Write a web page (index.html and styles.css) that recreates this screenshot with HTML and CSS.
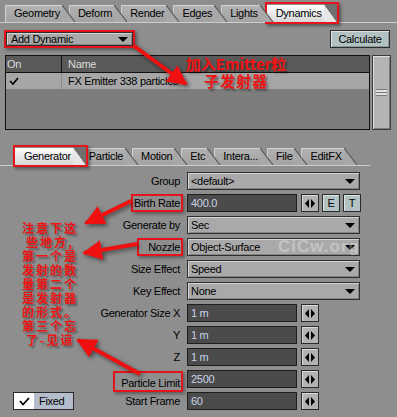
FILE: index.html
```html
<!DOCTYPE html>
<html lang="en">
<head>
    <meta charset="UTF-8">
    <meta name="viewport" content="width=device-width, initial-scale=1.0">
    <title>Dynamics</title>
    <link rel="stylesheet" href="styles.css">
</head>
<body>

<div class="panel">
    <div class="tabbar top-tabs">
        <div class="tab">Geometry</div>
        <div class="tab">Deform</div>
        <div class="tab">Render</div>
        <div class="tab">Edges</div>
        <div class="tab">Lights</div>
        <div class="mark mark-tab"><div class="tab active">Dynamics</div></div>
    </div>

    <div class="toolbar">
        <div class="mark mark-add"><div class="select add-dynamic"><span>Add Dynamic</span></div></div>
        <div class="button calc">Calculate</div>
    </div>

    <div class="listwrap">
        <div class="list">
            <div class="list-head">
                <div class="col-on">On</div>
                <div class="col-name">Name</div>
            </div>
            <div class="list-row">
                <div class="col-on">
                    <svg width="10" height="9" viewBox="0 0 10 9"><polyline points="1,4 4,7 9,1" fill="none" stroke="#000" stroke-width="1.6"/></svg>
                </div>
                <div class="col-name">FX Emitter 338 particles</div>
            </div>
        </div>
        <div class="scrollbar">
            <div class="grip"></div>
        </div>
    </div>

    <div class="tabbar sub-tabs">
        <div class="mark mark-tab"><div class="tab active">Generator</div></div>
        <div class="tab">Particle</div>
        <div class="tab">Motion</div>
        <div class="tab">Etc</div>
        <div class="tab">Intera...</div>
        <div class="tab">File</div>
        <div class="tab">EditFX</div>
    </div>

    <div class="form">
        <div class="row">
            <div class="label"><span>Group</span></div>
            <div class="select"><span>&lt;default&gt;</span></div>
        </div>
        <div class="row">
            <div class="label"><span class="marked">Birth Rate</span></div>
            <div class="field">400.0</div>
            <div class="spin"><svg width="10" height="9" viewBox="0 0 10 9"><polygon points="0,4.5 4,0 4,9"/><polygon points="6,0 10,4.5 6,9"/></svg></div>
            <div class="small-btn">E</div>
            <div class="small-btn">T</div>
        </div>
        <div class="row">
            <div class="label"><span>Generate by</span></div>
            <div class="select"><span>Sec</span></div>
        </div>
        <div class="row">
            <div class="label"><span class="marked nozzle">Nozzle</span></div>
            <div class="select"><span>Object-Surface</span></div>
        </div>
        <div class="row">
            <div class="label"><span>Size Effect</span></div>
            <div class="select"><span>Speed</span></div>
        </div>
        <div class="row">
            <div class="label"><span>Key Effect</span></div>
            <div class="select"><span>None</span></div>
        </div>
        <div class="row">
            <div class="label"><span>Generator Size X</span></div>
            <div class="field">1 m</div>
            <div class="spin"><svg width="10" height="9" viewBox="0 0 10 9"><polygon points="0,4.5 4,0 4,9"/><polygon points="6,0 10,4.5 6,9"/></svg></div>
        </div>
        <div class="row">
            <div class="label"><span>Y</span></div>
            <div class="field">1 m</div>
            <div class="spin"><svg width="10" height="9" viewBox="0 0 10 9"><polygon points="0,4.5 4,0 4,9"/><polygon points="6,0 10,4.5 6,9"/></svg></div>
        </div>
        <div class="row">
            <div class="label"><span>Z</span></div>
            <div class="field">1 m</div>
            <div class="spin"><svg width="10" height="9" viewBox="0 0 10 9"><polygon points="0,4.5 4,0 4,9"/><polygon points="6,0 10,4.5 6,9"/></svg></div>
        </div>
        <div class="row">
            <div class="label"><span class="marked limit">Particle Limit</span></div>
            <div class="field">2500</div>
            <div class="spin"><svg width="10" height="9" viewBox="0 0 10 9"><polygon points="0,4.5 4,0 4,9"/><polygon points="6,0 10,4.5 6,9"/></svg></div>
        </div>
        <div class="row">
            <div class="label split">
                <div class="fixed">
                    <div class="fixed-box"><svg width="11" height="9" viewBox="0 0 11 9"><polyline points="1,4 4,7.5 10,1" fill="none" stroke="#000" stroke-width="1.8"/></svg></div>
                    <div class="fixed-text">Fixed</div>
                </div>
                <span>Start Frame</span>
            </div>
            <div class="field">60</div>
            <div class="spin"><svg width="10" height="9" viewBox="0 0 10 9"><polygon points="0,4.5 4,0 4,9"/><polygon points="6,0 10,4.5 6,9"/></svg></div>
        </div>
    </div>

    <!-- overlays: watermark, notes, arrows -->
    <div class="watermark">CiCw.org</div>

    <div class="note note-top">
        <div>加入Emitter粒</div>
        <div>子发射器</div>
    </div>
    <div class="note note-left">
        <div>注意下这</div>
        <div>些地方,</div>
        <div>第一个是</div>
        <div>发射的数</div>
        <div>量第二个</div>
        <div>是发射器</div>
        <div>的形式。</div>
        <div>第三个忘</div>
        <div>了-见谅</div>
    </div>

    <svg class="arrows" width="397" height="417" viewBox="0 0 397 417">
        <defs>
            <marker id="head" viewBox="0 0 20 20" markerWidth="20" markerHeight="20" refX="18" refY="10" orient="auto" markerUnits="userSpaceOnUse">
                <path d="M0,0 L20,10 L0,20 Z" fill="#f01010"/>
            </marker>
        </defs>
        <g stroke="#f01010" stroke-width="4" marker-end="url(#head)">
            <line x1="134" y1="46" x2="186" y2="84"/>
            <line x1="131" y1="201" x2="86" y2="223"/>
            <line x1="137" y1="244" x2="84" y2="253"/>
            <line x1="140" y1="374" x2="78" y2="340"/>
        </g>
    </svg>
</div>

</body>
</html>
```

FILE: styles.css
```css
body {
    margin: 0;
    background-color: #8e8e8e;
    font-family: "Liberation Sans", Arial, sans-serif;
    font-size: 11px;
    letter-spacing: -0.3px;
    color: #000;
}
.panel {
    position: relative;
    width: 397px;
    height: 417px;
    overflow: hidden;
}

/* tabs */
.tabbar {
    display: flex;
    align-items: flex-end;
    height: 22px;
    border-bottom: 1px solid #cdcdcd;
    box-sizing: content-box;
}
.top-tabs {
    padding-left: 5px;
}
.sub-tabs {
    width: 355px;
    padding-left: 15px;
    margin-top: 13px;
}
.tabbar > * {
    position: relative;
}
.tabbar > *:nth-child(1) { z-index: 7; }
.tabbar > *:nth-child(2) { z-index: 6; }
.tabbar > *:nth-child(3) { z-index: 5; }
.tabbar > *:nth-child(4) { z-index: 4; }
.tabbar > *:nth-child(5) { z-index: 3; }
.tabbar > *:nth-child(6) { z-index: 2; }
.tabbar > *:nth-child(7) { z-index: 1; }
.tab {
    height: 17px;
    line-height: 17px;
    padding: 0 15px 0 9px;
    margin-right: -6px;
    background: linear-gradient(#d2d2d2 0, #d2d2d2 1px, #b2b2b2 1px, #a2a2a2) no-repeat left top / calc(100% - 13px) 100%;
    box-shadow: inset 1px 0 0 #cfcfcf;
}
.tab::after {
    content: "";
    position: absolute;
    top: 0;
    right: 0;
    width: 13px;
    height: 100%;
    background: linear-gradient(to top right, #a8a8a8 calc(50% - 1px), #505050 50%, transparent calc(50% + 1px));
}
.tab.active {
    background-image: linear-gradient(#fdfdfd, #d6d6d6);
    box-shadow: none;
}
.tab.active::after {
    background: linear-gradient(to top right, #e6e6e6 calc(50% - 0.5px), #6f6f6f 50%);
}

/* red marks */
.mark {
    border: 2px solid #e3141b;
    box-shadow: 2px 2px 3px rgba(0, 0, 0, 0.4);
}
.mark-tab {
    padding: 1px 0 0 0;
    margin: 0 -8px -2px -2px;
}
.mark-tab .tab {
    margin-right: 0;
}
.mark-add {
    margin: 0 0 0 -2px;
}

/* toolbar */
.toolbar {
    display: flex;
    justify-content: space-between;
    align-items: center;
    height: 18px;
    padding: 7px 7px 0 6px;
}
.select {
    width: 173px;
    height: 18px;
    box-sizing: border-box;
    border: 1px solid #2e2e2e;
    background-color: #a9a9a9;
    box-shadow: inset 1px 1px 0 #d4d4d4, inset -1px -1px 0 #848484;
    display: flex;
    align-items: center;
    justify-content: space-between;
    padding: 0 4px 0 3px;
}
.select::after {
    content: "";
    border-left: 5px solid transparent;
    border-right: 5px solid transparent;
    border-top: 5px solid #000;
}
.add-dynamic {
    width: 127px;
    height: 14px;
    padding: 0 4px 0 4px;
}
.button {
    height: 18px;
    box-sizing: border-box;
    border: 1px solid #2e2e2e;
    background-color: #b2c2c2;
    box-shadow: inset 1px 1px 0 #dce6e6, inset -1px -1px 0 #8a9898;
    display: flex;
    align-items: center;
    justify-content: center;
}
.calc {
    width: 60px;
}

/* list */
.listwrap {
    display: flex;
    gap: 2px;
    margin: 7px 0 0 5px;
}
.list {
    width: 365px;
    height: 75px;
    box-sizing: border-box;
    border: 1px solid #111;
    background-color: #7d7d7d;
}
.list-head,
.list-row {
    display: flex;
    height: 16px;
    line-height: 16px;
}
.list-head {
    background-color: #5a5a5a;
    color: #dcdcdc;
    border-bottom: 1px solid #111;
}
.list-row {
    background-color: #a6a6a6;
}
.col-on {
    width: 54px;
    padding-left: 1px;
    border-right: 1px solid #111;
    display: flex;
    align-items: center;
}
.list-row .col-on {
    border-right-color: #8a8a8a;
    padding-left: 3px;
    width: 52px;
}
.col-name {
    padding-left: 6px;
}
.scrollbar {
    width: 19px;
    height: 75px;
    box-sizing: border-box;
    border: 1px solid #3c3c3c;
    background-color: #b4b4b4;
    box-shadow: inset 1px 1px 0 #dedede, inset -1px -1px 0 #7c7c7c;
    display: flex;
    align-items: center;
    justify-content: center;
}
.grip {
    width: 11px;
    height: 7px;
    background: repeating-linear-gradient(#7a7a7a 0, #7a7a7a 1px, #e0e0e0 1px, #e0e0e0 3px);
}

/* form */
.form {
    display: flex;
    flex-direction: column;
    gap: 4px;
    margin-top: 6px;
}
.row {
    display: flex;
    align-items: center;
    height: 18px;
    gap: 3px;
}
.label {
    width: 183px;
    margin-right: 1px;
    display: flex;
    justify-content: flex-end;
    align-items: center;
}
.label span {
    border: 2px solid transparent;
    padding: 0 1px;
    line-height: 14px;
}
.label span.marked {
    border-color: #e3141b;
    box-shadow: 2px 2px 3px rgba(0, 0, 0, 0.35);
}
.label span.nozzle {
    padding-left: 9px;
}
.label span.limit {
    padding: 3px 1px 0 6px;
    margin-bottom: -5px;
}
.label.split {
    justify-content: space-between;
    padding-left: 13px;
    box-sizing: border-box;
}
.field {
    width: 110px;
    height: 18px;
    box-sizing: border-box;
    border: 1px solid #1e1e1e;
    background-color: #4b4b4b;
    color: #c8d4ec;
    padding-left: 3px;
    line-height: 16px;
    margin-right: 1px;
}
.spin,
.small-btn {
    width: 18px;
    height: 18px;
    box-sizing: border-box;
    border: 1px solid #2a2a2a;
    display: flex;
    align-items: center;
    justify-content: center;
}
.spin {
    background-color: #b2b2b2;
    box-shadow: inset 1px 1px 0 #dadada;
}
.small-btn {
    background-color: #b2c2c2;
    box-shadow: inset 1px 1px 0 #dce6e6;
}
.fixed {
    display: flex;
    height: 18px;
    box-sizing: border-box;
    border: 1px solid #2a2a2a;
}
.fixed-box {
    width: 20px;
    background-color: #fff;
    display: flex;
    align-items: center;
    justify-content: center;
}
.fixed-text {
    width: 34px;
    padding-left: 5px;
    background-color: #b3bdcc;
    line-height: 16px;
}

/* overlays */
.watermark {
    position: absolute;
    left: 278px;
    top: 237px;
    font-size: 17px;
    font-weight: bold;
    letter-spacing: 1px;
    color: rgba(255, 255, 255, 0.32);
}
.note {
    position: absolute;
    font-family: "Noto Sans CJK SC", "Liberation Sans", sans-serif;
    font-weight: bold;
    color: #f21313;
    text-align: center;
    letter-spacing: 0;
    text-shadow: 2px 2px 2px rgba(0, 0, 0, 0.4);
}
.note-top {
    left: 180px;
    top: 55px;
    width: 112px;
    font-size: 15px;
}
.note-top div {
    height: 17px;
    line-height: 17px;
}
.note-top div + div {
    letter-spacing: 1px;
}
.note-left {
    left: 19px;
    top: 221px;
    width: 62px;
    font-size: 12px;
    letter-spacing: 2px;
}
.note-left div {
    height: 14px;
    line-height: 14px;
}
.arrows {
    position: absolute;
    left: 0;
    top: 0;
    filter: drop-shadow(2px 2px 2px rgba(0, 0, 0, 0.5));
}
```
